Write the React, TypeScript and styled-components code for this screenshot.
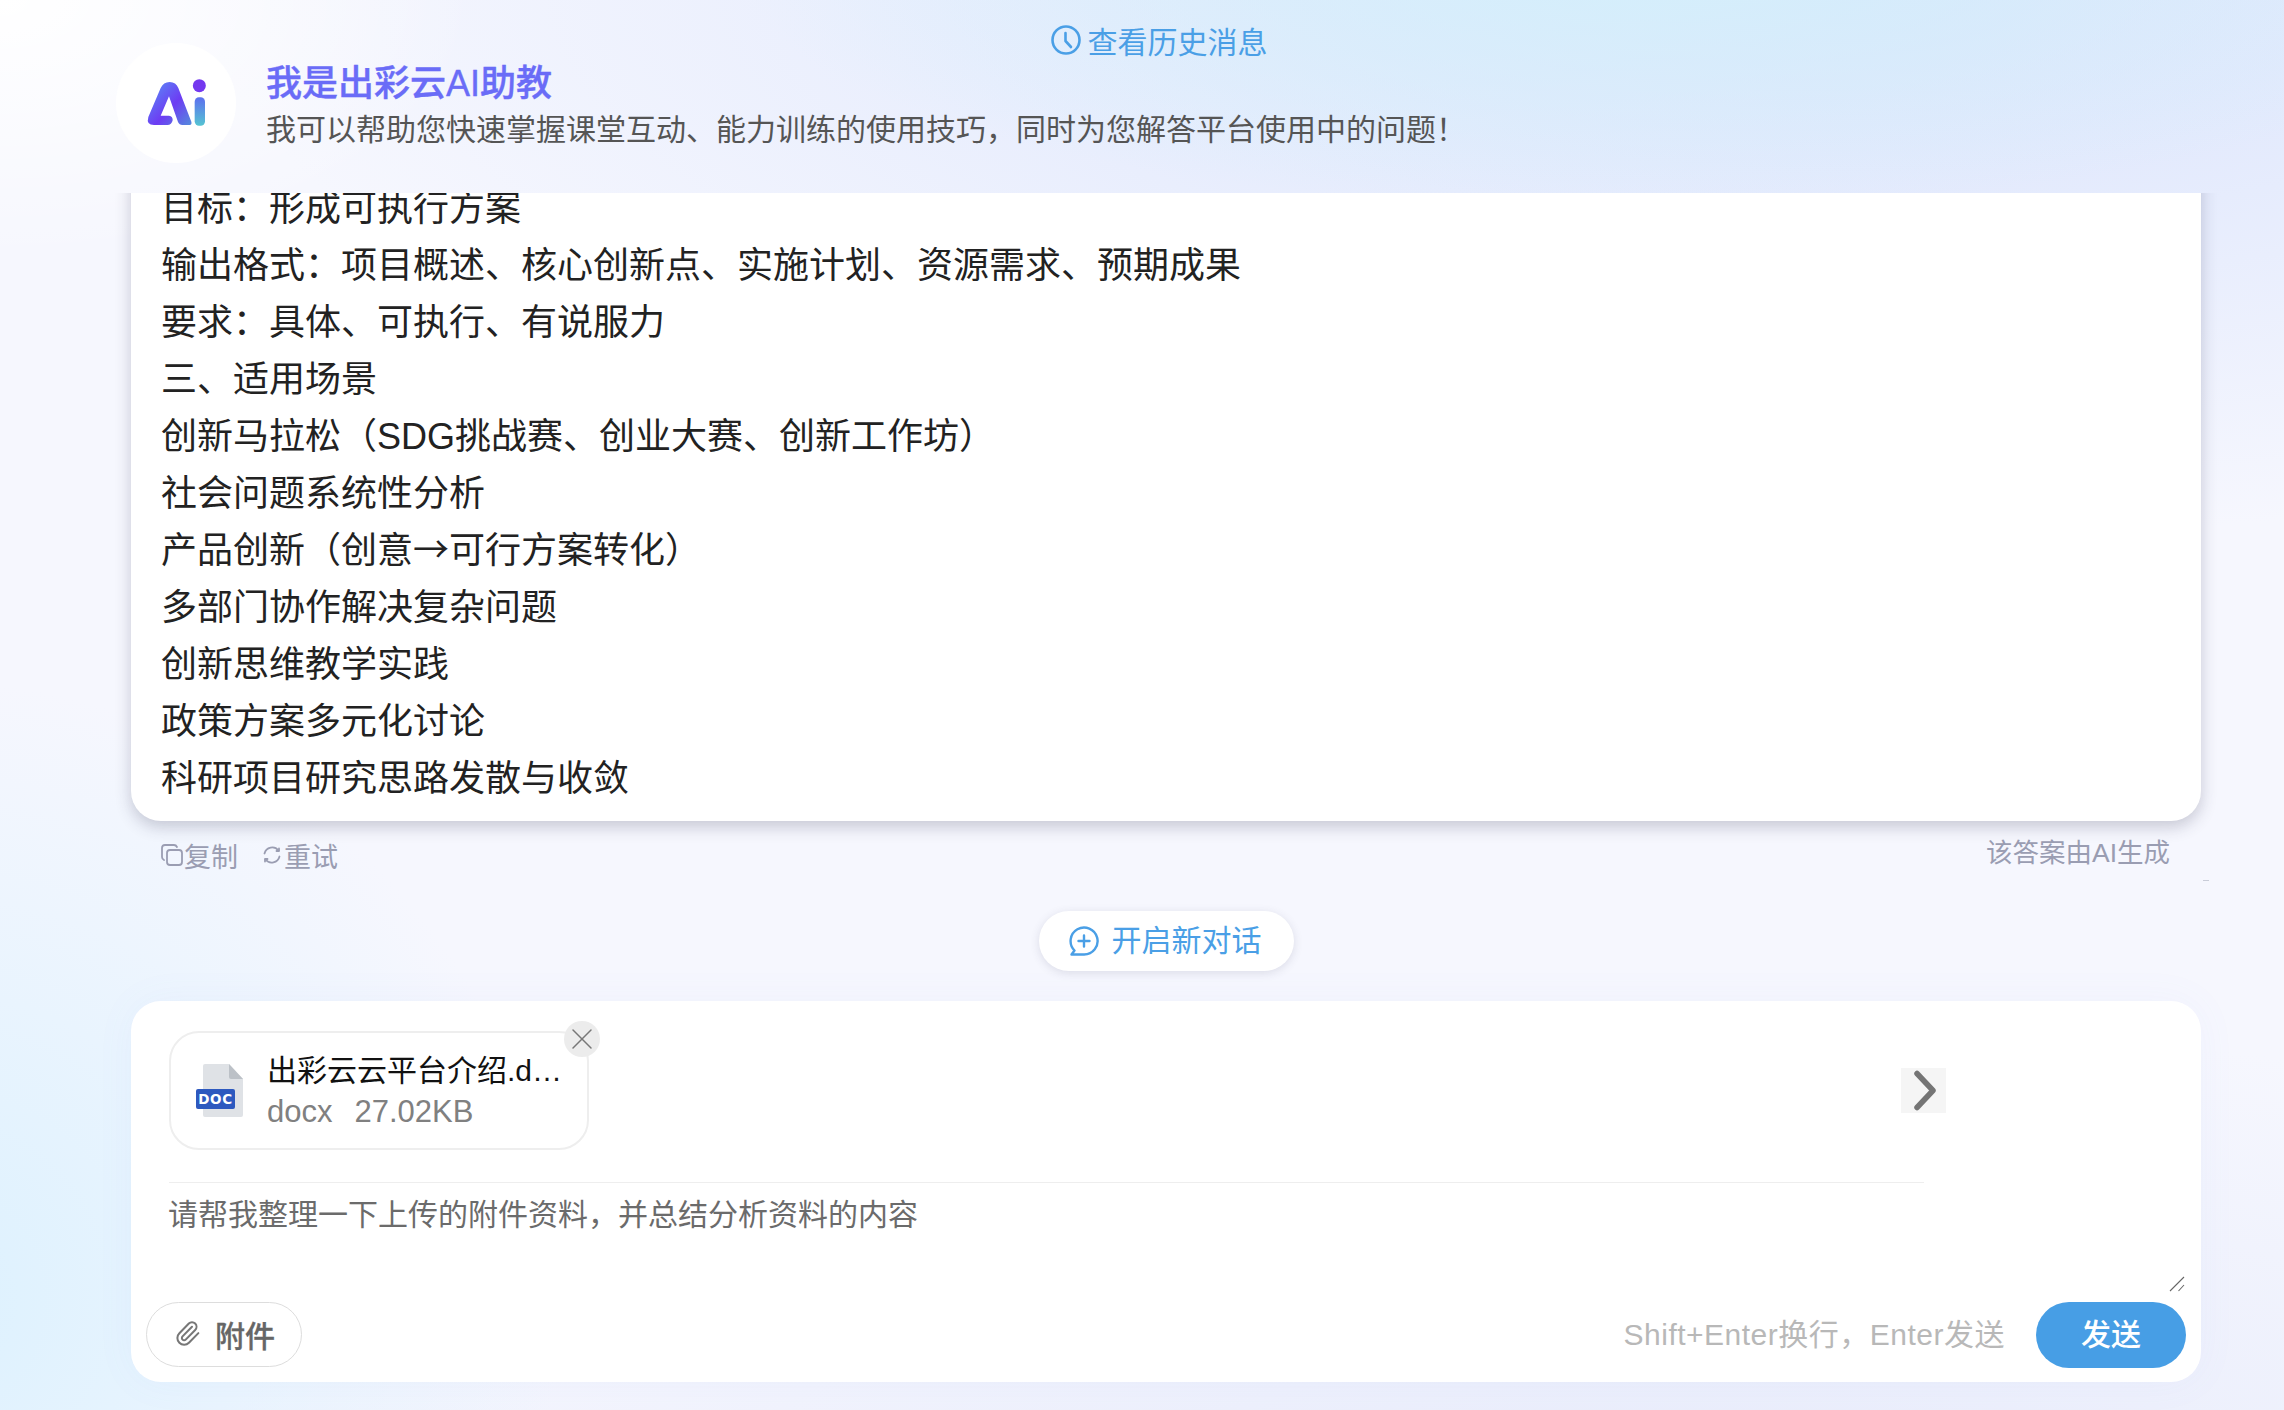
import React from "react";
import { Paperclip, X } from "lucide-react";
import styled, { createGlobalStyle } from "styled-components";

const FONT = `"Liberation Sans", "Noto Sans CJK SC", sans-serif`;
const BLUE = "#4a9fe6";

const Arrow = styled.span`
  font-family: "Noto Sans CJK SC", sans-serif;
  line-height: 0;
`;

const MESSAGE_LINES: React.ReactNode[] = [
  "目标：形成可执行方案",
  "输出格式：项目概述、核心创新点、实施计划、资源需求、预期成果",
  "要求：具体、可执行、有说服力",
  "三、适用场景",
  "创新马拉松（SDG挑战赛、创业大赛、创新工作坊）",
  "社会问题系统性分析",
  <>
    产品创新（创意<Arrow>→</Arrow>可行方案转化）
  </>,
  "多部门协作解决复杂问题",
  "创新思维教学实践",
  "政策方案多元化讨论",
  "科研项目研究思路发散与收敛",
];

const LogoMark = () => (
  <svg width="65" height="50" viewBox="130 145 195 150">
    <defs>
      <linearGradient id="logo-a" gradientUnits="userSpaceOnUse" x1="150" y1="160" x2="290" y2="290">
        <stop offset="0" stopColor="#5a8df6" />
        <stop offset="0.5" stopColor="#6d3cf3" />
        <stop offset="1" stopColor="#4f9bd8" />
      </linearGradient>
      <linearGradient id="logo-i" gradientUnits="userSpaceOnUse" x1="297" y1="200" x2="297" y2="288">
        <stop offset="0" stopColor="#5d6cf0" />
        <stop offset="1" stopColor="#55c4d2" />
      </linearGradient>
    </defs>
    <path
      d="M160 286Q136 286 143 262L180 175Q188 157 207 157Q226 157 233 175L272 276Q275 286 264 286L245 286Q236 286 232 277L205 200L180 258L205 258Q217 260 216 272Q213 286 200 286Z"
      fill="url(#logo-a)"
    />
    <circle cx="296" cy="168" r="19.5" fill="#7438ef" />
    <rect x="282" y="203" width="31" height="85" rx="13" fill="url(#logo-i)" />
  </svg>
);

const ClockIcon = () => (
  <svg width="30" height="30" viewBox="0 0 30 30" fill="none" stroke={BLUE} strokeWidth="2.6" strokeLinecap="round" strokeLinejoin="round">
    <circle cx="15" cy="15" r="13.5" />
    <polyline points="14.5,8 14.5,16 20,22" />
  </svg>
);

const CopyIcon = () => (
  <svg width="22" height="22" viewBox="0 0 22 22" fill="none" stroke="#9a9db2" strokeWidth="1.8" strokeLinecap="round">
    <rect x="6" y="6" width="15" height="15" rx="3" />
    <path d="M3 16Q1 15 1 13V4Q1 1 4 1H13Q15 1 16 3" />
  </svg>
);

const RetryIcon = () => (
  <svg width="22" height="22" viewBox="0 0 22 22" fill="none" stroke="#9a9db2" strokeWidth="1.8" strokeLinecap="round" strokeLinejoin="round">
    <path d="M3.5 9.5A8 8 0 0 1 17.5 6.5" />
    <path d="M18.5 12.5A8 8 0 0 1 4.5 15.5" />
    <path d="M18 4.5V7H15.5M4 17.5V15H6.5" />
  </svg>
);

const NewChatIcon = () => (
  <svg width="30" height="30" viewBox="0 0 30 30" fill="none" stroke={BLUE} strokeWidth="2.4" strokeLinejoin="round" strokeLinecap="round">
    <path d="M15 28.5H2.5L5.5 24.5A13.5 13.5 0 1 1 15 28.5Z" />
    <path d="M15 9.5V20.5M9.5 15H20.5" />
  </svg>
);

const DocIcon = () => (
  <svg width="47" height="53" viewBox="0 0 47 53">
    <path d="M9 0H33L47 15V51Q47 53 45 53H9Q7 53 7 51V2Q7 0 9 0Z" fill="#dfe2e6" />
    <path d="M33 0L47 15H35Q33 15 33 13Z" fill="#bcc1c7" />
    <rect x="0" y="25" width="39" height="20" rx="2" fill="#2d59bf" />
    <text x="19.5" y="40" textAnchor="middle" fill="#fff" fontSize="13.5" fontWeight="700" letterSpacing="0.6" fontFamily="'DejaVu Sans', sans-serif">
      DOC
    </text>
  </svg>
);

const ChevronIcon = () => (
  <svg width="27" height="41" viewBox="0 0 27 41" fill="none" stroke="#757575" strokeWidth="5.5" strokeLinecap="round" strokeLinejoin="round">
    <polyline points="7,3.5 23,20.5 7,37.5" />
  </svg>
);

const GripIcon = () => (
  <svg width="16" height="16" viewBox="0 0 16 16" fill="none" stroke="#666" strokeWidth="1.1">
    <path d="M1 15L15 1M9.5 15L15 9" />
  </svg>
);

const App = () => (
  <Page>
    <GlobalStyle />
    <Header>
      <HistoryRow>
        <HistoryLink>
          <ClockIcon />
          查看历史消息
        </HistoryLink>
      </HistoryRow>
      <Intro>
        <Avatar>
          <LogoMark />
        </Avatar>
        <IntroText>
          <Title>我是出彩云AI助教</Title>
          <Subtitle>我可以帮助您快速掌握课堂互动、能力训练的使用技巧，同时为您解答平台使用中的问题！</Subtitle>
        </IntroText>
      </Intro>
    </Header>

    <Main>
      <ScrollArea>
        <MessageCard>
          {MESSAGE_LINES.map((line, index) => (
            <MessageLine key={index}>{line}</MessageLine>
          ))}
        </MessageCard>
        <MessageMeta>
          <Actions>
            <ActionItem>
              <CopyIcon />
              复制
            </ActionItem>
            <ActionItem>
              <RetryIcon />
              重试
            </ActionItem>
          </Actions>
          <Disclaimer>该答案由AI生成</Disclaimer>
        </MessageMeta>
        <ScrollThumb />
      </ScrollArea>

      <NewChatRow>
        <NewChatButton>
          <NewChatIcon />
          开启新对话
        </NewChatButton>
      </NewChatRow>

      <InputCard>
        <FileRow>
          <FileChip>
            <DocIcon />
            <FileInfo>
              <FileName>出彩云云平台介绍.docx</FileName>
              <FileMeta>
                <span>docx</span>
                <span>27.02KB</span>
              </FileMeta>
            </FileInfo>
            <RemoveButton>
              <X size={42} strokeWidth={1} color="#777" />
            </RemoveButton>
          </FileChip>
          <NextButton>
            <ChevronIcon />
          </NextButton>
        </FileRow>
        <PromptField>
          <PromptInput defaultValue="请帮我整理一下上传的附件资料，并总结分析资料的内容" />
          <ResizeGrip>
            <GripIcon />
          </ResizeGrip>
        </PromptField>
        <InputFooter>
          <AttachButton>
            <Paperclip size={27} strokeWidth={1.8} color="#777" />
            附件
          </AttachButton>
          <SendGroup>
            <SendHint>Shift+Enter换行，Enter发送</SendHint>
            <SendButton>发送</SendButton>
          </SendGroup>
        </InputFooter>
      </InputCard>
    </Main>
  </Page>
);

const GlobalStyle = createGlobalStyle`
  html, body {
    margin: 0;
    padding: 0;
    height: 100%;
    overflow: hidden;
  }

  * {
    box-sizing: border-box;
  }
`;

const Page = styled.div`
  display: flex;
  flex-direction: column;
  width: 2284px;
  height: 1410px;
  overflow: hidden;
  font-family: ${FONT};
  background:
    radial-gradient(480px 260px at 0 0, #ffffff 0%, rgba(255, 255, 255, 0) 100%),
    radial-gradient(900px 240px at 1640px -30px, #d4effb 0%, rgba(212, 239, 251, 0) 100%),
    radial-gradient(1650px 560px at 1850px -20px, #d9e3fc 0%, rgba(217, 227, 252, 0) 100%),
    radial-gradient(640px 620px at -80px 1300px, #dcf1fe 0%, rgba(220, 241, 254, 0) 100%),
    radial-gradient(1500px 480px at 1700px 1500px, #e8ecfb 0%, rgba(232, 236, 251, 0) 100%),
    #f6f7fe;
`;

const Header = styled.header`
  flex: 0 0 193px;
  padding-top: 15px;
`;

const HistoryRow = styled.div`
  display: flex;
  justify-content: center;
  height: 50px;
  padding-left: 34px;
`;

const HistoryLink = styled.a`
  display: flex;
  align-items: center;
  gap: 7px;
  font-size: 30px;
  color: ${BLUE};
`;

const Intro = styled.div`
  display: flex;
  align-items: center;
  gap: 30px;
  margin-top: -22px;
  padding-left: 116px;
`;

const Avatar = styled.div`
  display: flex;
  align-items: center;
  justify-content: center;
  width: 120px;
  height: 120px;
  border-radius: 50%;
  background: #fff;
`;

const IntroText = styled.div`
  display: flex;
  flex-direction: column;
  padding-top: 7px;
`;

const Title = styled.h1`
  margin: 0;
  font-size: 36px;
  line-height: 46px;
  font-weight: 500;
  color: #6a6cf7;
  -webkit-text-stroke: 0.35px #6a6cf7;
`;

const Subtitle = styled.p`
  margin: 0;
  font-size: 30px;
  line-height: 46px;
  color: #555;
`;

const Main = styled.main`
  display: flex;
  flex: 1;
  flex-direction: column;
  min-height: 0;
  padding: 0 83px 28px 131px;
`;

const ScrollArea = styled.div`
  position: relative;
  display: flex;
  flex: 0 0 688px;
  flex-direction: column;
  justify-content: flex-end;
  margin: 0 -83px 0 -131px;
  padding: 0 83px 5px 131px;
  overflow: hidden;
`;

const MessageCard = styled.div`
  flex-shrink: 0;
  padding: 40px 30px 14px;
  background: #fff;
  border-radius: 30px;
  box-shadow: 0 6px 16px rgba(50, 50, 80, 0.24);
`;

const MessageLine = styled.div`
  font-size: 36px;
  line-height: 57px;
  color: #222;
`;

const MessageMeta = styled.div`
  display: flex;
  flex-shrink: 0;
  justify-content: space-between;
  height: 55px;
  padding: 14px 31px 0 30px;
`;

const Actions = styled.div`
  display: flex;
  gap: 23px;
  height: 40px;
`;

const ActionItem = styled.span`
  display: flex;
  align-items: center;
  gap: 1px;
  font-size: 27px;
  color: #9a9db2;
`;

const Disclaimer = styled.span`
  font-size: 26.5px;
  line-height: 36px;
  color: #9a9db2;
`;

const ScrollThumb = styled.i`
  position: absolute;
  right: 75px;
  bottom: 0;
  width: 6px;
  height: 1px;
  background: #c9ccd8;
`;

const NewChatRow = styled.div`
  display: flex;
  justify-content: center;
  margin: 30px 0;
`;

const NewChatButton = styled.button`
  display: flex;
  align-items: center;
  gap: 13px;
  width: 255px;
  height: 60px;
  padding: 0 0 0 30px;
  border: none;
  border-radius: 30px;
  background: #fff;
  box-shadow: 0 2px 10px rgba(60, 60, 90, 0.14);
  font-family: ${FONT};
  font-size: 30px;
  line-height: 54px;
  color: ${BLUE};
`;

const InputCard = styled.section`
  display: flex;
  flex-direction: column;
  height: 381px;
  padding: 30px 15px 14px;
  background: #fff;
  border-radius: 30px;
  box-shadow: 0 0 40px rgba(110, 130, 230, 0.05);
`;

const FileRow = styled.div`
  display: flex;
  flex-shrink: 0;
  align-items: center;
  justify-content: space-between;
  width: 1755px;
  height: 152px;
  margin-left: 23px;
  padding-bottom: 32px;
  border-bottom: 1px solid #eee;
`;

const FileChip = styled.div`
  position: relative;
  display: flex;
  align-items: center;
  gap: 24px;
  width: 420px;
  height: 119px;
  padding: 0 15px 0 25px;
  border: 2px solid #eee;
  border-radius: 30px;
`;

const FileInfo = styled.div`
  flex: 1;
  min-width: 0;
`;

const FileName = styled.div`
  overflow: hidden;
  font-size: 30px;
  line-height: 41px;
  color: #111;
  white-space: nowrap;
  text-overflow: ellipsis;
`;

const FileMeta = styled.div`
  display: flex;
  gap: 22px;
  font-size: 31px;
  line-height: 41px;
  color: #808080;
`;

const RemoveButton = styled.span`
  position: absolute;
  top: -12px;
  right: -13px;
  display: flex;
  align-items: center;
  justify-content: center;
  width: 36px;
  height: 36px;
  border-radius: 50%;
  background: #ececec;
`;

const NextButton = styled.span`
  display: flex;
  align-items: center;
  justify-content: center;
  width: 45px;
  height: 45px;
  margin-right: -22px;
  background: #f5f5f5;
`;

const PromptField = styled.div`
  position: relative;
  flex-shrink: 0;
  width: 2018px;
  height: 110px;
  margin-left: 22px;
`;

const PromptInput = styled.textarea`
  display: block;
  width: 100%;
  height: 100%;
  padding: 11px 0 0;
  border: none;
  outline: none;
  resize: none;
  background: transparent;
  font-family: ${FONT};
  font-size: 30px;
  line-height: 42px;
  color: #6b6b6b;
`;

const ResizeGrip = styled.span`
  position: absolute;
  right: 1px;
  bottom: 1px;
  display: flex;
  width: 16px;
  height: 16px;
`;

const InputFooter = styled.div`
  display: flex;
  align-items: center;
  justify-content: space-between;
  height: 67px;
  margin-top: 8px;
`;

const AttachButton = styled.button`
  display: flex;
  align-items: center;
  gap: 14px;
  width: 156px;
  height: 65px;
  padding: 0 0 2px 27px;
  border: 1.5px solid #ddd;
  border-radius: 33px;
  background: #fff;
  font-family: ${FONT};
  font-size: 30px;
  font-weight: 500;
  color: #666;
  -webkit-text-stroke: 0.3px #666;
`;

const SendGroup = styled.div`
  display: flex;
  align-items: center;
  gap: 31px;
`;

const SendHint = styled.span`
  margin-bottom: 5px;
  font-size: 30px;
  letter-spacing: 0.5px;
  color: #b8b8b8;
`;

const SendButton = styled.button`
  width: 150px;
  height: 66px;
  padding: 0 0 5px;
  border: none;
  border-radius: 33px;
  background: #479ee5;
  font-family: ${FONT};
  font-size: 30px;
  font-weight: 500;
  color: #fff;
`;

export default App;
